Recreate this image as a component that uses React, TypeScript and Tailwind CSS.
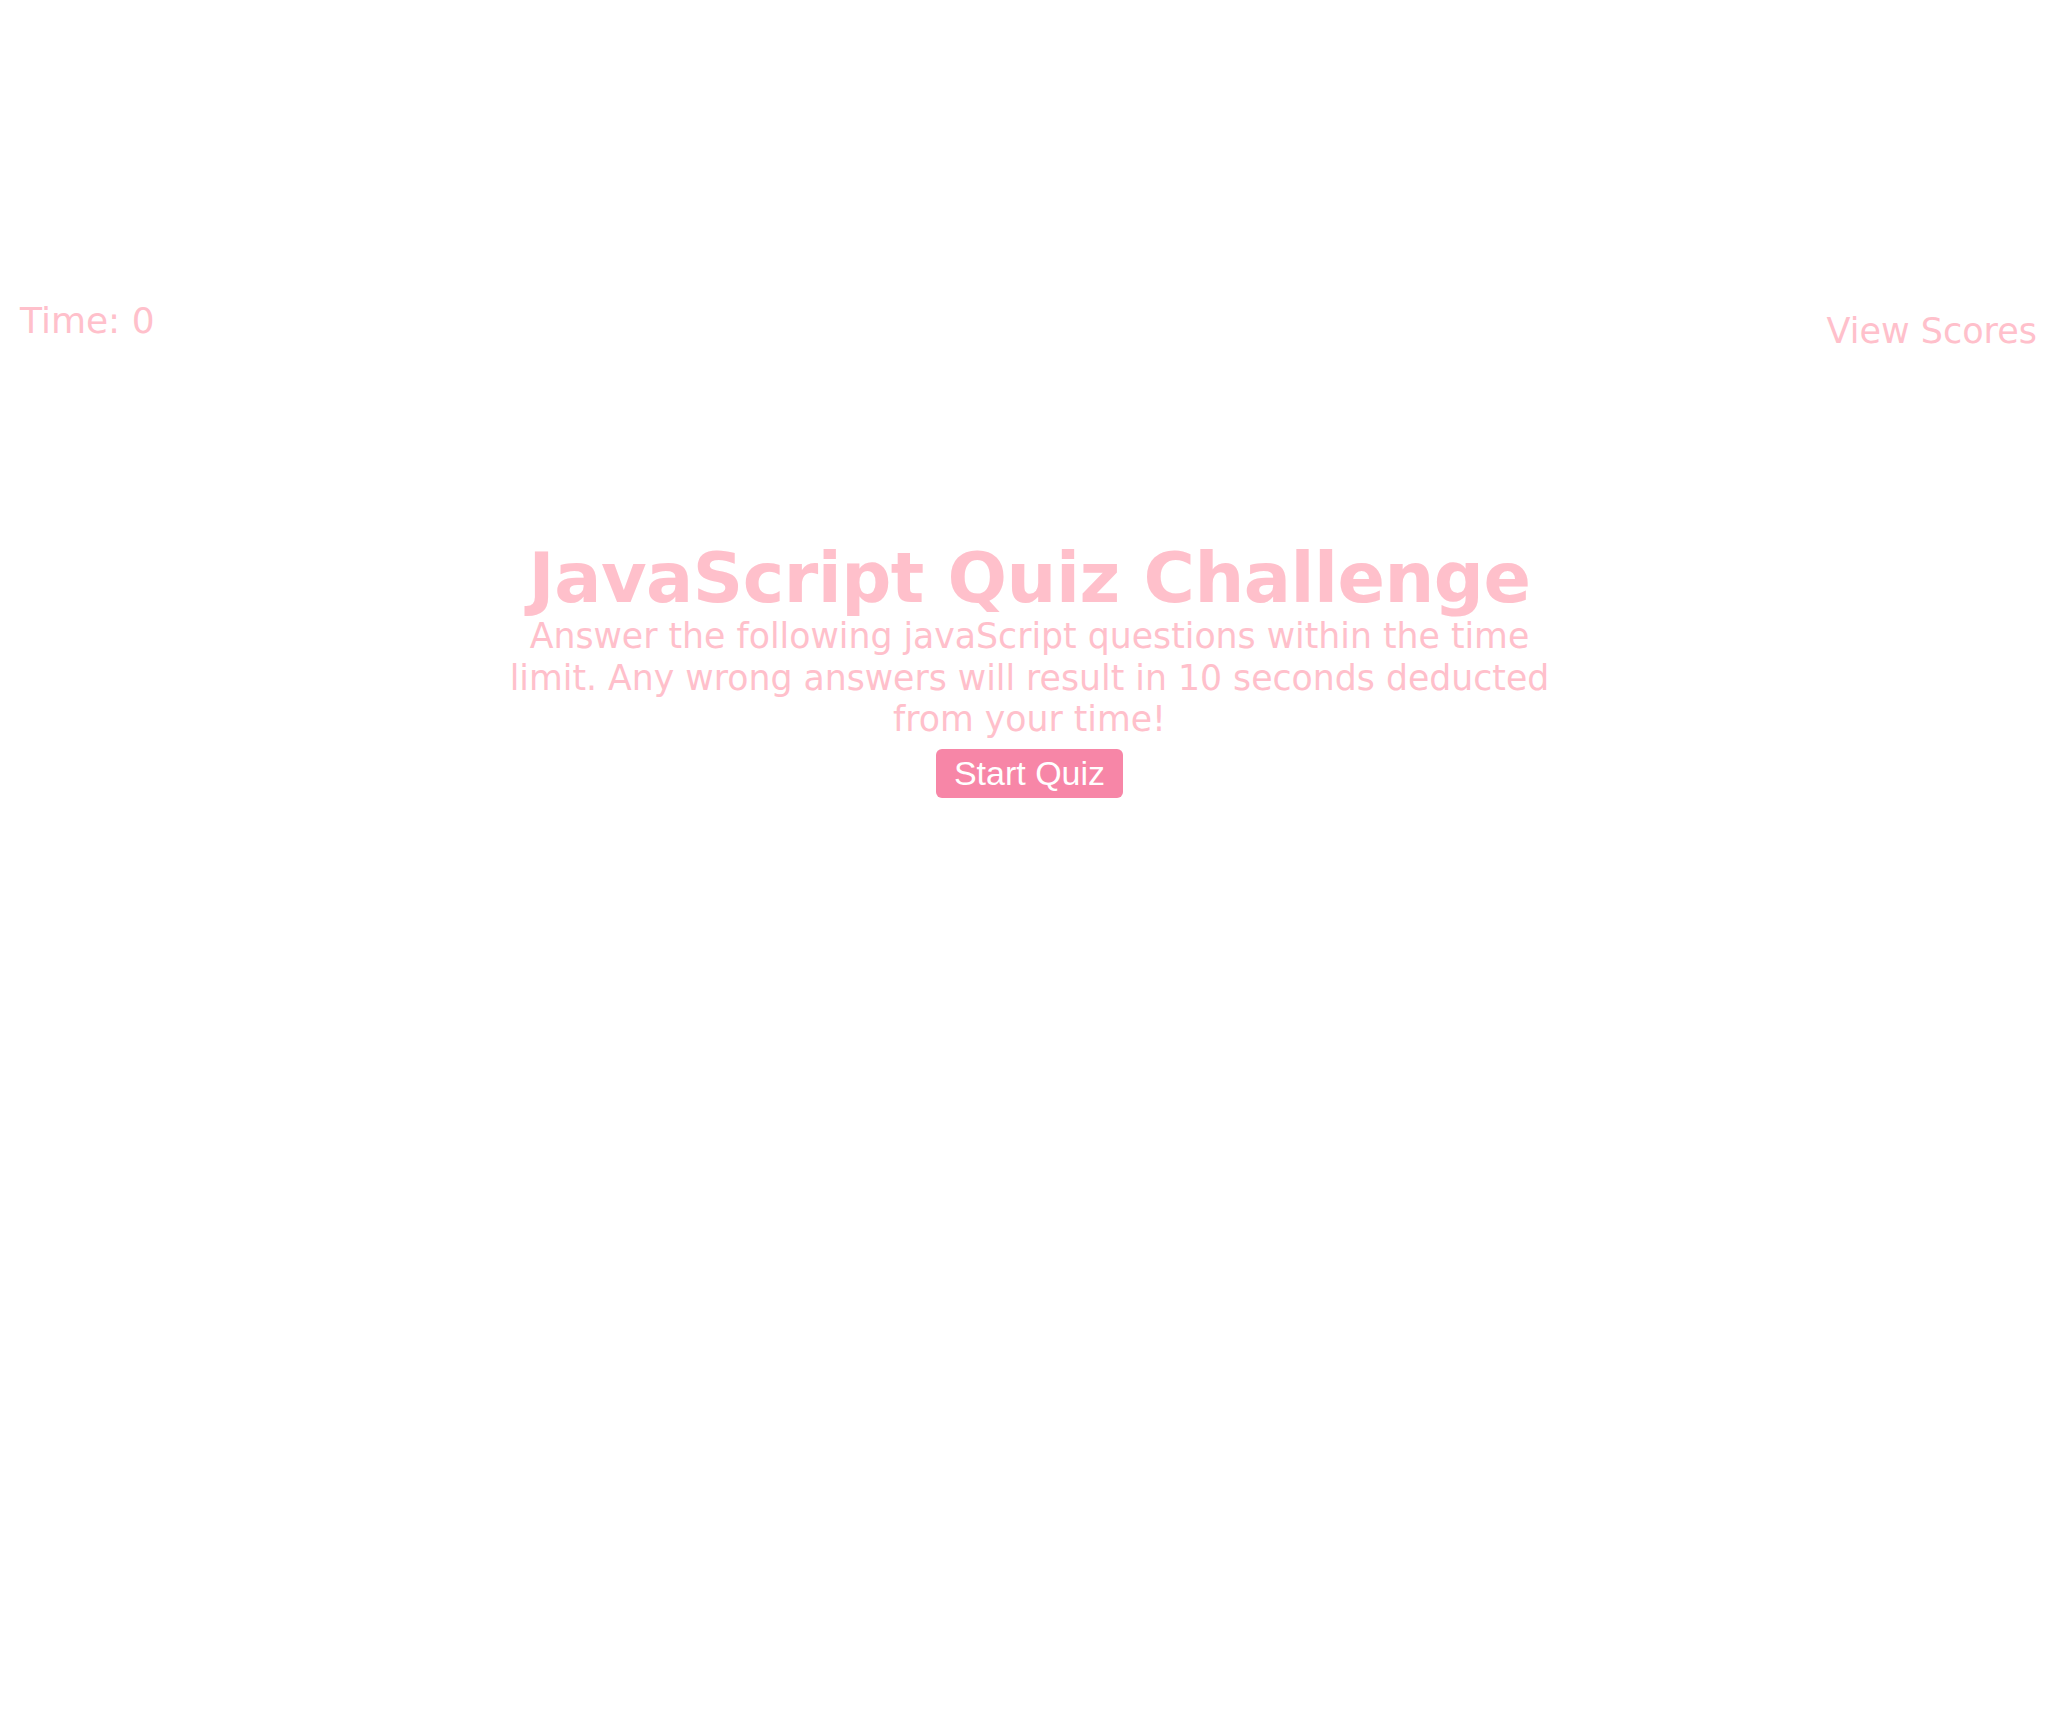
export default function App() {
  return (
    <div className="min-h-screen bg-white font-['DejaVu_Sans',Verdana,sans-serif] text-[#ffc0cb]">
      {/* Header */}
      <header className="flex items-start justify-between pt-[300px] pl-[20px] pr-[22px]">
        <div className="text-[36px] leading-[42px]">Time: 0</div>
        <a className="mt-[11px] text-[35px] leading-[41px] cursor-pointer">View Scores</a>
      </header>

      {/* Start screen */}
      <main className="mt-[186px] flex flex-col items-center">
        <h1 className="text-[70px] leading-[80px] font-bold tracking-[-0.5px]">JavaScript Quiz Challenge</h1>
        <p className="-mt-[2px] w-[1060px] text-center text-[34.7px] leading-[41.5px]">
          Answer the following javaScript questions within the time limit. Any wrong answers will
          result in 10 seconds deducted from your time!
        </p>
        <button className="mt-[8.5px] rounded-[6px] bg-[#f786a7] px-[18px] py-[5px] font-['Liberation_Sans',Arial,sans-serif] text-[34px] leading-[39px] text-white">
          Start Quiz
        </button>
      </main>
    </div>
  );
}
